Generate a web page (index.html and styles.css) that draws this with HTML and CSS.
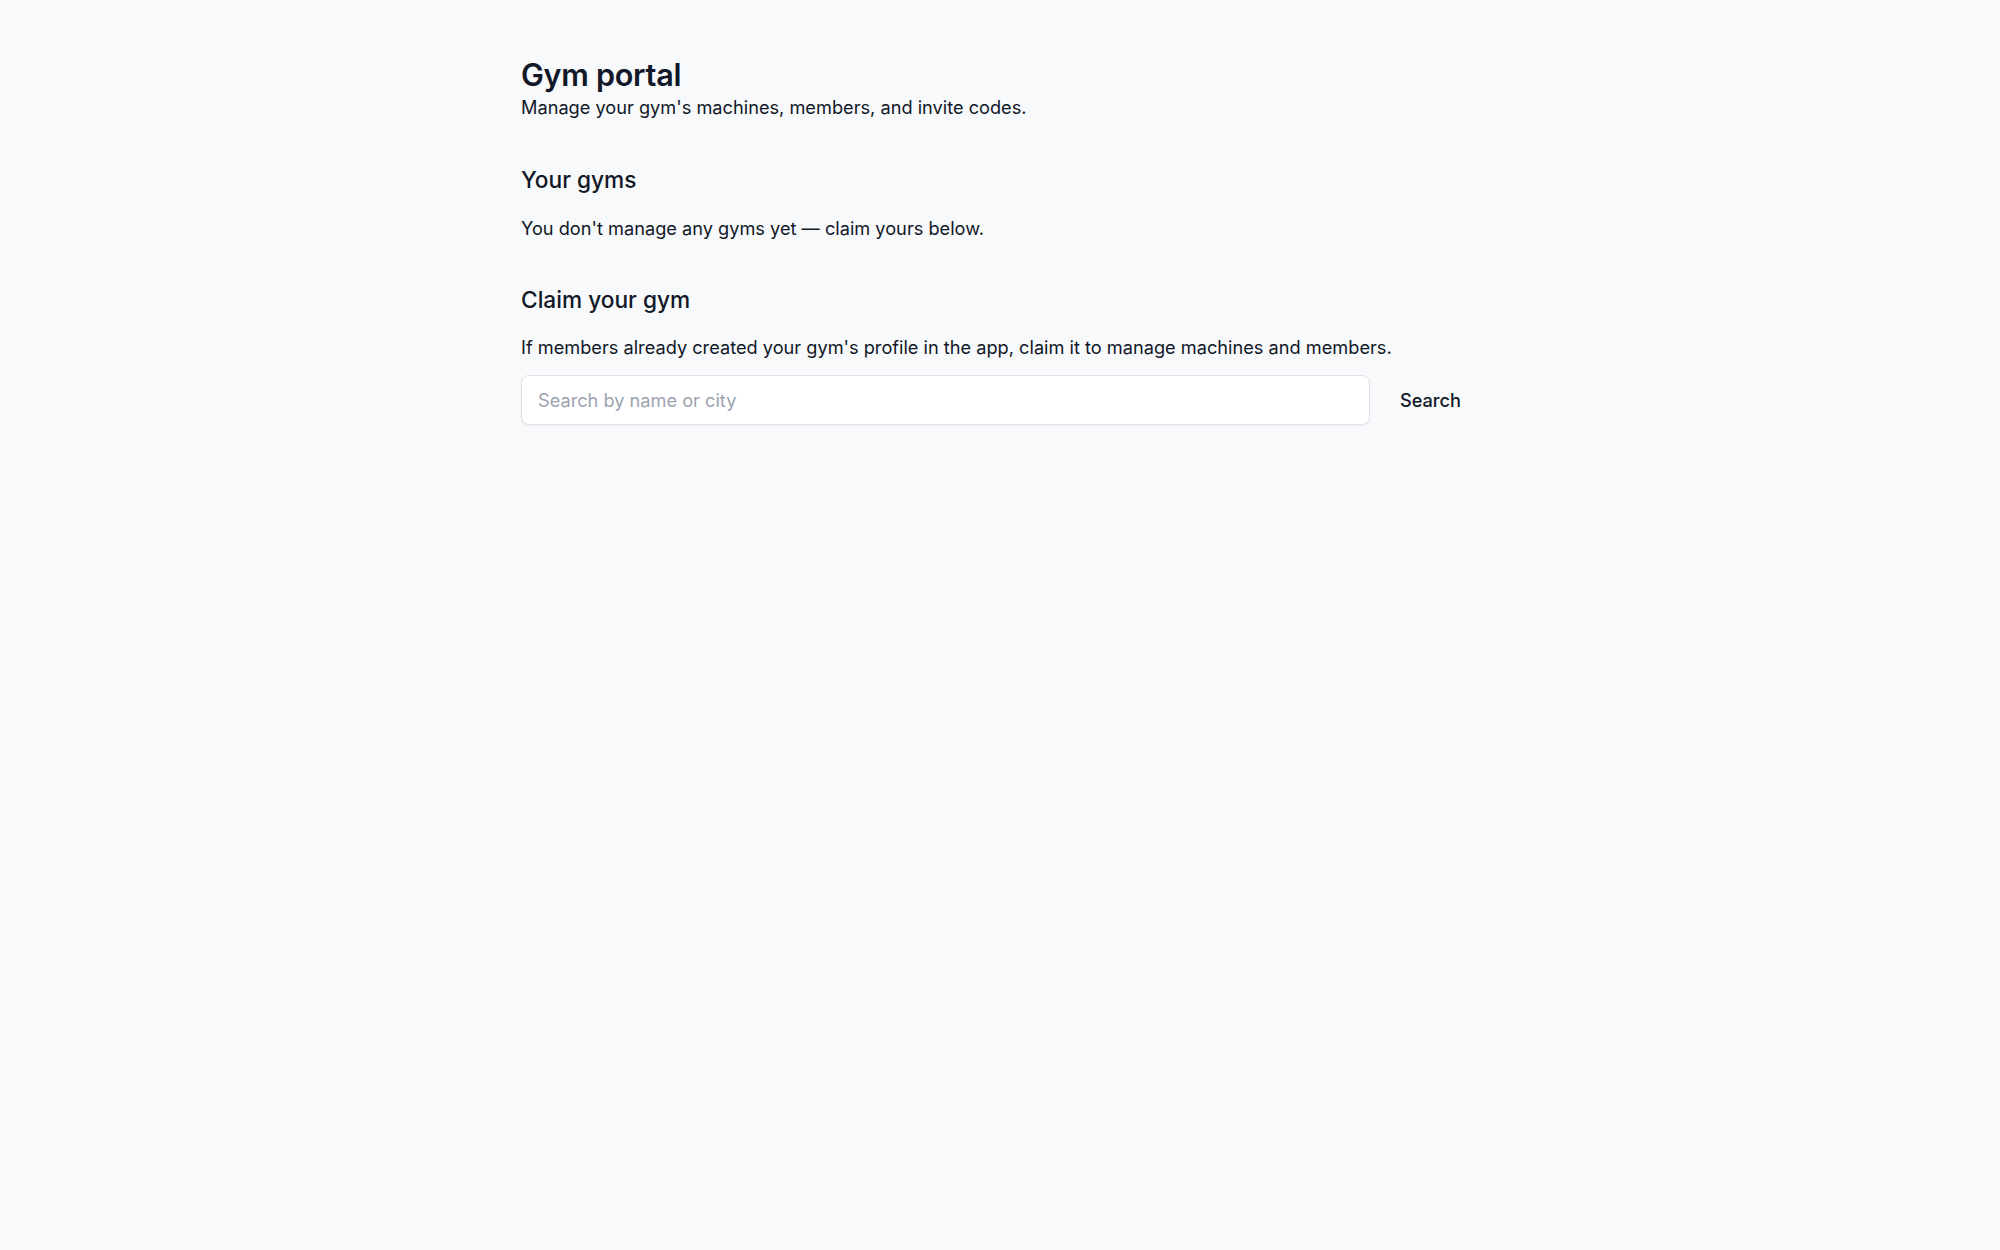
FILE: index.html
```html
<!DOCTYPE html>
<html lang="en">

<head>
    <meta charset="UTF-8">
    <meta name="viewport" content="width=device-width, initial-scale=1.0">
    <link rel="stylesheet" href="styles.css">
    <title>Gym portal</title>
</head>

<body>
    <main class="portal">
        <header class="portal-head">
            <h1>Gym portal</h1>
            <p>Manage your gym's machines, members, and invite codes.</p>
        </header>

        <section class="block">
            <h2>Your gyms</h2>
            <p class="empty">You don't manage any gyms yet — claim yours below.</p>
        </section>

        <section class="block">
            <h2>Claim your gym</h2>
            <p>If members already created your gym's profile in the app, claim it to manage machines and members.</p>
            <form class="search" onsubmit="return false">
                <input type="text" placeholder="Search by name or city">
                <button type="submit">Search</button>
            </form>
        </section>
    </main>
</body>

</html>
```

FILE: styles.css
```css
* {
    margin: 0;
    padding: 0;
    box-sizing: border-box;
}

body {
    background: #f8f9fb;
    color: #111827;
    font-family: Inter, "Noto Sans", sans-serif;
}

.portal {
    max-width: 962px;
    margin: 0 auto;
    padding: 56px 0 56px 2px;
}

.portal-head h1 {
    font-size: 30.6px;
    font-weight: 600;
    line-height: 38px;
    letter-spacing: -0.3px;
}

.portal-head p {
    font-size: 18.2px;
    line-height: 27px;
}

.block {
    margin-top: 43.5px;
}

.block h2 {
    font-size: 22.7px;
    font-weight: 500;
    line-height: 30px;
}

.block p {
    margin-top: 19px;
    font-size: 18.2px;
    line-height: 26px;
}

.block p.empty {
    margin-top: 20.5px;
}

.search {
    display: flex;
    align-items: center;
    gap: 10px;
    margin-top: 15.5px;
}

.search input {
    flex: 1;
    height: 50px;
    padding: 0 16px;
    border: 1px solid #dfe2e8;
    border-radius: 8px;
    background: #fff;
    font: inherit;
    font-size: 18.2px;
    color: #111827;
    box-shadow: 0 1px 2px rgba(16, 24, 40, 0.05);
}

.search input::placeholder {
    color: #9ca3af;
}

.search button {
    padding: 12px 20px;
    border: none;
    background: transparent;
    font: inherit;
    font-size: 18.2px;
    font-weight: 500;
    color: #111827;
    cursor: pointer;
}
```
